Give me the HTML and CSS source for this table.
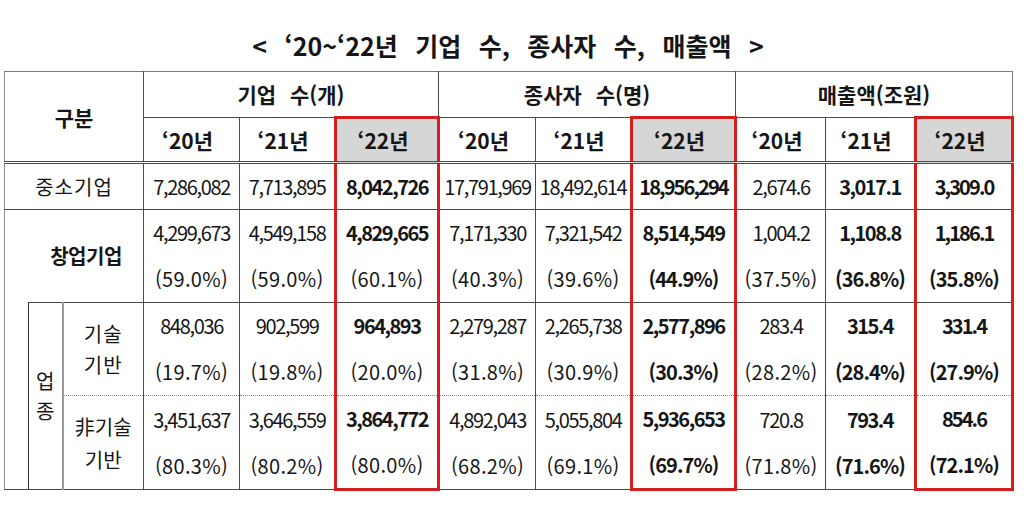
FILE: index.html
```html
<!DOCTYPE html>
<html lang="ko">
<head>
<meta charset="utf-8">
<title>'20~'22년 기업 수, 종사자 수, 매출액</title>
<link rel="stylesheet" href="styles.css">
</head>
<body>
<div class="page">
  <h1 class="title">&lt; ‘20~‘22년 기업 수, 종사자 수, 매출액 &gt;</h1>
  <table class="stats">
    <colgroup>
      <col class="c-a"><col class="c-b"><col class="c-c">
      <col class="c-d"><col class="c-e"><col class="c-f">
      <col class="c-g"><col class="c-h"><col class="c-i">
      <col class="c-j"><col class="c-k"><col class="c-l">
    </colgroup>
    <thead>
      <tr class="h1row">
        <th colspan="3" rowspan="2" class="gubun">구분</th>
        <th colspan="3">기업 수(개)</th>
        <th colspan="3">종사자 수(명)</th>
        <th colspan="3" class="last">매출액(조원)</th>
      </tr>
      <tr class="h2row">
        <th>‘20년</th><th>‘21년</th><th class="hl">‘22년</th>
        <th>‘20년</th><th>‘21년</th><th class="hl">‘22년</th>
        <th>‘20년</th><th>‘21년</th><th class="hl">‘22년</th>
      </tr>
    </thead>
    <tbody>
      <tr class="r1">
        <td colspan="3" class="label">중소기업</td>
        <td class="num">7,286,082</td>
        <td class="num">7,713,895</td>
        <td class="num hl b">8,042,726</td>
        <td class="num">17,791,969</td>
        <td class="num">18,492,614</td>
        <td class="num hl b tight">18,956,294</td>
        <td class="num">2,674.6</td>
        <td class="num b">3,017.1</td>
        <td class="num hl b tight">3,309.0</td>
      </tr>
      <tr class="r2">
        <td colspan="3" class="label startup">창업기업</td>
        <td><span class="n">4,299,673</span><span class="p">(59.0%)</span></td>
        <td><span class="n">4,549,158</span><span class="p">(59.0%)</span></td>
        <td class="hl"><span class="n b">4,829,665</span><span class="p">(60.1%)</span></td>
        <td><span class="n">7,171,330</span><span class="p">(40.3%)</span></td>
        <td><span class="n">7,321,542</span><span class="p">(39.6%)</span></td>
        <td class="hl"><span class="n b">8,514,549</span><span class="p b">(44.9%)</span></td>
        <td><span class="n">1,004.2</span><span class="p">(37.5%)</span></td>
        <td><span class="n b">1,108.8</span><span class="p b">(36.8%)</span></td>
        <td class="hl"><span class="n b tight">1,186.1</span><span class="p b">(35.8%)</span></td>
      </tr>
      <tr class="r3">
        <td rowspan="2" class="blank"></td>
        <td rowspan="2" class="vert">업<br>종</td>
        <td class="sub">기술<br>기반</td>
        <td><span class="n">848,036</span><span class="p">(19.7%)</span></td>
        <td><span class="n">902,599</span><span class="p">(19.8%)</span></td>
        <td class="hl"><span class="n b">964,893</span><span class="p">(20.0%)</span></td>
        <td><span class="n">2,279,287</span><span class="p">(31.8%)</span></td>
        <td><span class="n">2,265,738</span><span class="p">(30.9%)</span></td>
        <td class="hl"><span class="n b">2,577,896</span><span class="p b">(30.3%)</span></td>
        <td><span class="n">283.4</span><span class="p">(28.2%)</span></td>
        <td><span class="n b">315.4</span><span class="p b">(28.4%)</span></td>
        <td class="hl"><span class="n b tight">331.4</span><span class="p b">(27.9%)</span></td>
      </tr>
      <tr class="r4">
        <td class="sub sub2">非기술<br>기반</td>
        <td><span class="n">3,451,637</span><span class="p">(80.3%)</span></td>
        <td><span class="n">3,646,559</span><span class="p">(80.2%)</span></td>
        <td class="hl"><span class="n b">3,864,772</span><span class="p">(80.0%)</span></td>
        <td><span class="n">4,892,043</span><span class="p">(68.2%)</span></td>
        <td><span class="n">5,055,804</span><span class="p">(69.1%)</span></td>
        <td class="hl"><span class="n b">5,936,653</span><span class="p b">(69.7%)</span></td>
        <td><span class="n">720.8</span><span class="p">(71.8%)</span></td>
        <td><span class="n b">793.4</span><span class="p b">(71.6%)</span></td>
        <td class="hl"><span class="n b tight">854.6</span><span class="p b">(72.1%)</span></td>
      </tr>
    </tbody>
  </table>
</div>
</body>
</html>
```

FILE: styles.css
```css
html, body {
  margin: 0;
  background: #ffffff;
}

body {
  font-family: "Noto Sans CJK KR", "Noto Sans", sans-serif;
  color: #161616;
}

.page {
  width: 1008px;
  margin-left: 4px;
}

.title {
  margin: 0;
  height: 71px;
  box-sizing: border-box;
  padding-top: 30px;
  font-size: 25px;
  line-height: 30px;
  font-weight: 700;
  text-align: center;
  word-spacing: 10.5px;
}

.stats {
  width: 1008px;
  border-collapse: collapse;
  table-layout: fixed;
}

.c-a { width: 24px; }
.c-b { width: 34px; }
.c-c { width: 81px; }
.c-d { width: 96px; }
.c-e { width: 96px; }
.c-f { width: 103px; }
.c-g { width: 97px; }
.c-h { width: 96px; }
.c-i { width: 104px; }
.c-j { width: 90px; }
.c-k { width: 90px; }
.c-l { width: 97px; }

.stats th,
.stats td {
  border: 1px solid #4a4a4a;
  padding: 0;
  text-align: center;
  vertical-align: middle;
  font-size: 20px;
  font-weight: 400;
  line-height: 26px;
  white-space: nowrap;
}

.stats tr > :first-child {
  border-left: 1px solid #8a8a8a;
}

.stats th {
  font-size: 21px;
  font-weight: 700;
  word-spacing: 8px;
}

.h1row th {
  height: 44px;
  border-top: 1px solid #7a7a7a;
}

.h1row th.last {
  border-right: 1px solid #7a7a7a;
}

.h2row th {
  height: 42px;
  padding-right: 8px;
  border-bottom: 3px double #4a4a4a;
}

.stats th.gubun {
  border-bottom: 3px double #4a4a4a;
}

.r1 td { height: 45px; }
.r2 td { height: 91px; }
.r3 td { height: 92px; }
.r4 td { height: 91px; }

.label {
  letter-spacing: 1px;
}

.stats td.startup {
  font-weight: 700;
  letter-spacing: -0.5px;
  padding-left: 24px;
  border-bottom: none;
}

.stats td.blank {
  border-top: none;
  border-right: 1px solid #333333;
}

.stats td.vert {
  line-height: 30px;
  border-right: 2px solid #9a9a9a;
}

.stats td.sub {
  line-height: 31px;
  letter-spacing: 1px;
}

.stats td.sub2 {
  line-height: 33px;
  letter-spacing: 0;
}

.r3 td:not(.blank):not(.vert) {
  border-bottom: 1px dotted #8a8a8a;
}

.r4 td {
  border-top: 1px dotted #8a8a8a;
}

.n,
.p {
  display: block;
  line-height: 46px;
}

.stats .num,
.stats .n {
  letter-spacing: -1.35px;
}

.stats .p {
  letter-spacing: 0.3px;
}

.stats .b {
  font-weight: 700;
}

.stats .num.b,
.stats .n.b {
  letter-spacing: -1.5px;
}

.stats .num.b.tight,
.stats .n.b.tight {
  letter-spacing: -1.9px;
}

.stats .p.b {
  letter-spacing: -0.9px;
}

.stats .hl {
  border-left: 3px solid #d3201f;
  border-right: 3px solid #d3201f;
}

.h2row th.hl {
  border-top: 3px solid #d3201f;
  background: #d6d6d6;
}

.r4 td.hl {
  border-bottom: 3px solid #d3201f;
}
```
